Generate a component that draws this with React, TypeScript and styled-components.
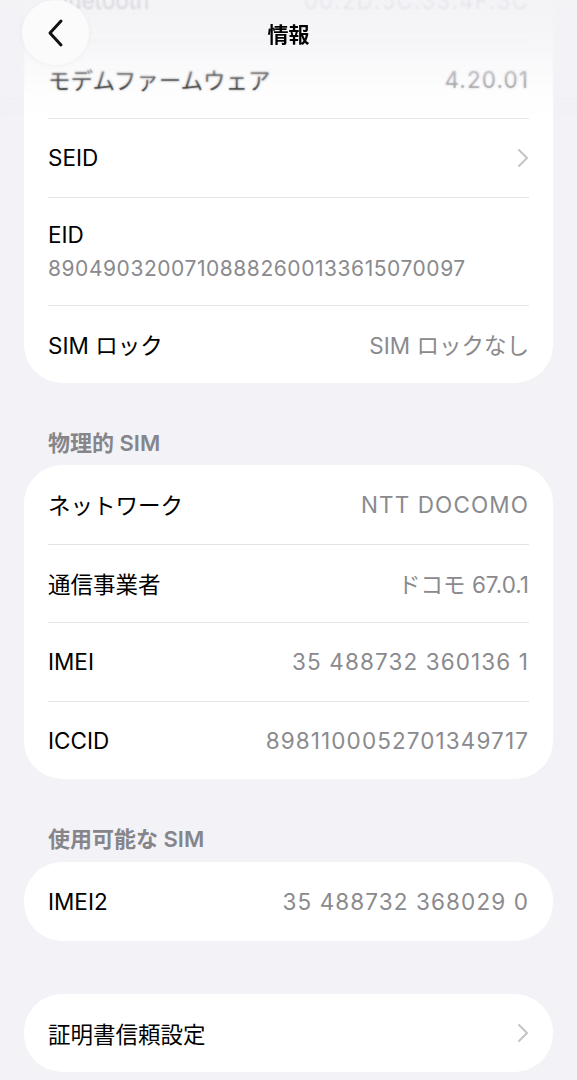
import React from "react";
import styled, { createGlobalStyle } from "styled-components";

const GlobalStyle = createGlobalStyle`
  html, body {
    margin: 0;
    padding: 0;
    background: #f2f2f7;
  }
  body {
    font-family: Inter, "Noto Sans CJK JP", sans-serif;
    -webkit-font-smoothing: antialiased;
  }
`;

const Screen = styled.div`
  position: relative;
  width: 577px;
  height: 1080px;
  overflow: hidden;
  background: #f2f2f7;
`;

// scrolled list: the first group starts above the viewport
const Content = styled.div`
  display: flex;
  flex-direction: column;
  padding: 0 24px;
  margin-top: -39px;
`;

const Group = styled.div<{ $gap?: number }>`
  display: flex;
  flex-direction: column;
  background: #ffffff;
  border-radius: 38px;
  overflow: hidden;
  margin-top: ${(p) => p.$gap ?? 0}px;
`;

const SectionTitle = styled.div<{ $top: number }>`
  margin-top: ${(p) => p.$top}px;
  padding: 0 24px;
  height: 33px;
  display: flex;
  align-items: center;
  font-size: 22px;
  font-weight: 600;
  color: #85858a;
`;

const Row = styled.div<{ $tall?: boolean }>`
  margin: 0 24px;
  height: ${(p) => (p.$tall ? 108 : 78.5)}px;
  box-sizing: border-box;
  display: flex;
  align-items: center;
  justify-content: space-between;
  gap: 12px;

  & + & {
    border-top: 1px solid #e4e4e8;
  }
`;

const Stack = styled.div`
  display: flex;
  flex-direction: column;
  gap: 8px;
`;

const Label = styled.span`
  font-size: 22.5px;
  color: #000;
  white-space: nowrap;
`;

const Value = styled.span<{ $small?: boolean; $num?: boolean }>`
  font-size: ${(p) => (p.$small ? 21 : 22.5)}px;
  letter-spacing: ${(p) => (!p.$num ? "0" : p.$small ? "0.55px" : "1.1px")};
  color: #8a8a8e;
  white-space: nowrap;
`;

const NavBar = styled.div`
  position: absolute;
  top: 0;
  left: 0;
  right: 0;
  height: 125px;
  background: linear-gradient(
    to bottom,
    rgba(242, 242, 246, 0.9) 0%,
    rgba(244, 244, 247, 0.55) 60%,
    rgba(250, 250, 252, 0) 100%
  );
  backdrop-filter: blur(1.2px);
  -webkit-mask-image: linear-gradient(to bottom, #000 40%, transparent 100%);
`;

const NavTitle = styled.div`
  position: absolute;
  top: 18px;
  left: 0;
  right: 0;
  text-align: center;
  font-size: 21px;
  font-weight: 700;
  color: #000;
`;

const BackButton = styled.button`
  position: absolute;
  top: 0;
  left: 22px;
  width: 67px;
  height: 65px;
  border: none;
  border-radius: 50%;
  background: #fbfbfc;
  box-shadow: 0 1px 6px rgba(0, 0, 0, 0.04);
  display: flex;
  align-items: center;
  justify-content: center;
  padding: 0;
`;

const Chevron = () => (
  <svg width="12" height="20" viewBox="0 0 12 20" fill="none">
    <polyline
      points="2,2 10,10 2,18"
      stroke="#c4c4c8"
      strokeWidth="2"
      strokeLinecap="round"
      strokeLinejoin="round"
    />
  </svg>
);

const BackIcon = () => (
  <svg width="18" height="30" viewBox="0 0 18 30" fill="none">
    <polyline
      points="14,3 3,15 14,27"
      stroke="#111"
      strokeWidth="3"
      strokeLinecap="round"
      strokeLinejoin="round"
    />
  </svg>
);

const App: React.FC = () => (
  <Screen>
    <GlobalStyle />
    <Content>
      <Group>
        <Row>
          <Label>Bluetooth</Label>
          <Value $num>00:2D:5C:33:4F:3C</Value>
        </Row>
        <Row>
          <Label>モデムファームウェア</Label>
          <Value $num>4.20.01</Value>
        </Row>
        <Row>
          <Label>SEID</Label>
          <Chevron />
        </Row>
        <Row $tall>
          <Stack>
            <Label>EID</Label>
            <Value $small $num>
              89049032007108882600133615070097
            </Value>
          </Stack>
        </Row>
        <Row>
          <Label>SIM ロック</Label>
          <Value>SIM ロックなし</Value>
        </Row>
      </Group>

      <SectionTitle $top={41}>物理的 SIM</SectionTitle>
      <Group $gap={8}>
        <Row>
          <Label>ネットワーク</Label>
          <Value $num>NTT DOCOMO</Value>
        </Row>
        <Row>
          <Label>通信事業者</Label>
          <Value>ドコモ 67.0.1</Value>
        </Row>
        <Row>
          <Label>IMEI</Label>
          <Value $num>35 488732 360136 1</Value>
        </Row>
        <Row>
          <Label>ICCID</Label>
          <Value $num>8981100052701349717</Value>
        </Row>
      </Group>

      <SectionTitle $top={41}>使用可能な SIM</SectionTitle>
      <Group $gap={9}>
        <Row>
          <Label>IMEI2</Label>
          <Value $num>35 488732 368029 0</Value>
        </Row>
      </Group>

      <Group $gap={53}>
        <Row>
          <Label>証明書信頼設定</Label>
          <Chevron />
        </Row>
      </Group>
    </Content>

    <NavBar />
    <NavTitle>情報</NavTitle>
    <BackButton aria-label="戻る">
      <BackIcon />
    </BackButton>
  </Screen>
);

export default App;
